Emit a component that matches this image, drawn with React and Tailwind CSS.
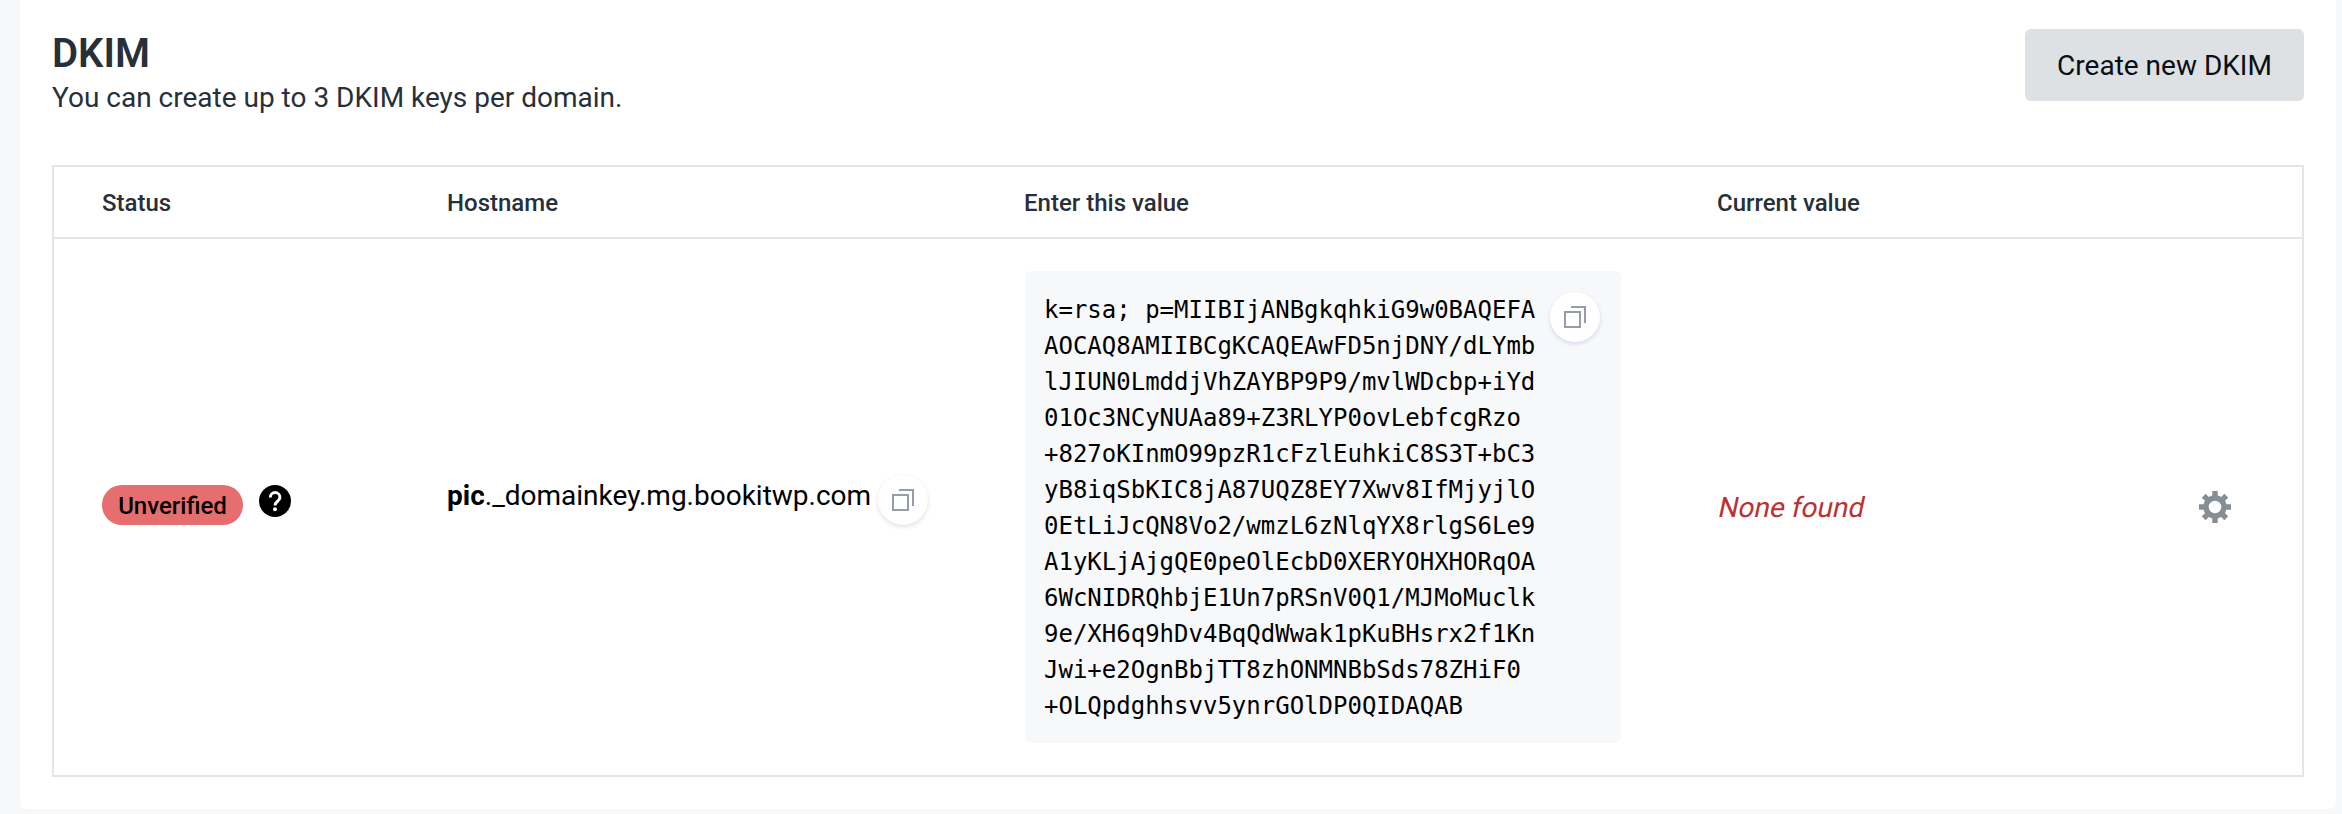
import clsx from "clsx";

const columns = [
  { label: "Status", className: "w-[345px]" },
  { label: "Hostname", className: "w-[577px]" },
  { label: "Enter this value", className: "w-[693px]" },
  { label: "Current value", className: "flex-1" },
];

const keyLines = [
  "k=rsa; p=MIIBIjANBgkqhkiG9w0BAQEFA",
  "AOCAQ8AMIIBCgKCAQEAwFD5njDNY/dLYmb",
  "lJIUN0LmddjVhZAYBP9P9/mvlWDcbp+iYd",
  "01Oc3NCyNUAa89+Z3RLYP0ovLebfcgRzo",
  "+827oKInmO99pzR1cFzlEuhkiC8S3T+bC3",
  "yB8iqSbKIC8jA87UQZ8EY7Xwv8IfMjyjlO",
  "0EtLiJcQN8Vo2/wmzL6zNlqYX8rlgS6Le9",
  "A1yKLjAjgQE0peOlEcbD0XERYOHXHORqOA",
  "6WcNIDRQhbjE1Un7pRSnV0Q1/MJMoMuclk",
  "9e/XH6q9hDv4BqQdWwak1pKuBHsrx2f1Kn",
  "Jwi+e2OgnBbjTT8zhONMNBbSds78ZHiF0",
  "+OLQpdghhsvv5ynrGOlDP0QIDAQAB",
];

function CopyButton({ className }) {
  return (
    <button
      aria-label="Copy"
      className={clsx(
        "flex size-[50px] shrink-0 items-center justify-center rounded-full bg-white shadow-[0_2px_4px_rgba(60,60,130,0.16)]",
        className
      )}
    >
      <svg className="h-[22px] w-[22px]" viewBox="0 0 22 22" fill="none" stroke="#959cab" strokeWidth="2">
        <rect x="1" y="6" width="15" height="15" />
        <path d="M7 1h14v16" />
      </svg>
    </button>
  );
}

function HelpIcon() {
  return (
    <svg className="size-8" viewBox="0 0 32 32">
      <circle cx="16" cy="16" r="16" />
      <path
        d="M11.3 12.4a4.8 4.8 0 0 1 9.6 0c0 3.4-4.9 4.2-4.9 8.2"
        fill="none"
        stroke="#fff"
        strokeWidth="3"
      />
      <circle cx="16" cy="24.3" r="2" fill="#fff" />
    </svg>
  );
}

function GearIcon() {
  return (
    <svg className="size-8" viewBox="0 0 32 32" fill="none" stroke="#868e96">
      <circle cx="16" cy="16" r="9" strokeWidth="5.5" />
      <path
        d="M16 0v6M16 26v6M0 16h6M26 16h6M4.7 4.7l4.2 4.2M23.1 23.1l4.2 4.2M4.7 27.3l4.2-4.2M23.1 8.9l4.2-4.2"
        strokeWidth="5.5"
      />
    </svg>
  );
}

export default function App() {
  return (
    <div className="h-[814px] bg-[#f7f8fa] pr-1.5 pl-5 font-['Roboto',sans-serif] text-[#272f38]">
      <section className="h-[809px] rounded-b-md bg-white px-8 pt-[29px]">
        {/* Heading */}
        <div className="flex h-[136px] items-start justify-between">
          <div className="pt-px">
            <h1 className="text-[40px] leading-[48px] font-semibold">DKIM</h1>
            <p className="text-[28px] leading-10">You can create up to 3 DKIM keys per domain.</p>
          </div>
          <button className="h-[72px] w-[279px] rounded-md bg-[#dde1e4] pt-0.5 text-[28px] text-[#0b0e12]">
            Create new DKIM
          </button>
        </div>

        {/* Records */}
        <div className="h-[612px] border-2 border-[#e2e7e6]">
          <div className="flex h-[72px] items-center border-b-2 border-[#e2e7e6] pt-0.5 pl-12 text-2xl font-medium">
            {columns.map((column) => (
              <div key={column.label} className={column.className}>
                {column.label}
              </div>
            ))}
          </div>

          <div className="flex h-[536px] items-center pl-12 text-black">
            <div className="flex w-[345px] items-start gap-4 pb-1">
              <span className="flex h-10 w-[141px] items-center justify-center rounded-full bg-[#e66e6e] pt-px text-2xl font-medium">
                Unverified
              </span>
              <HelpIcon />
            </div>
            <div className="flex w-[577px] items-center pb-[22px] text-[28px]">
              <span>
                <strong className="font-bold">pic</strong>._domainkey.mg.bookitwp.com
              </span>
              <CopyButton className="mt-2 ml-[7px]" />
            </div>
            <div className="w-[693px] pl-px">
              <div className="flex h-[472px] w-[596px] justify-between rounded-md bg-[#f7f8fa] py-5 pr-[21px] pl-[19px]">
                <code className="pt-px font-['DejaVu_Sans_Mono',monospace] text-2xl leading-9 whitespace-pre">
                  {keyLines.join("\n")}
                </code>
                <CopyButton className="mt-px" />
              </div>
            </div>
            <div className="flex-1 pt-0.5 pl-0.5 text-[28px] text-[#ba3232]">
              <em className="inline-block -skew-x-12 not-italic">None found</em>
            </div>
            <button aria-label="Settings" className="mr-[71px]">
              <GearIcon />
            </button>
          </div>
        </div>
      </section>
    </div>
  );
}
